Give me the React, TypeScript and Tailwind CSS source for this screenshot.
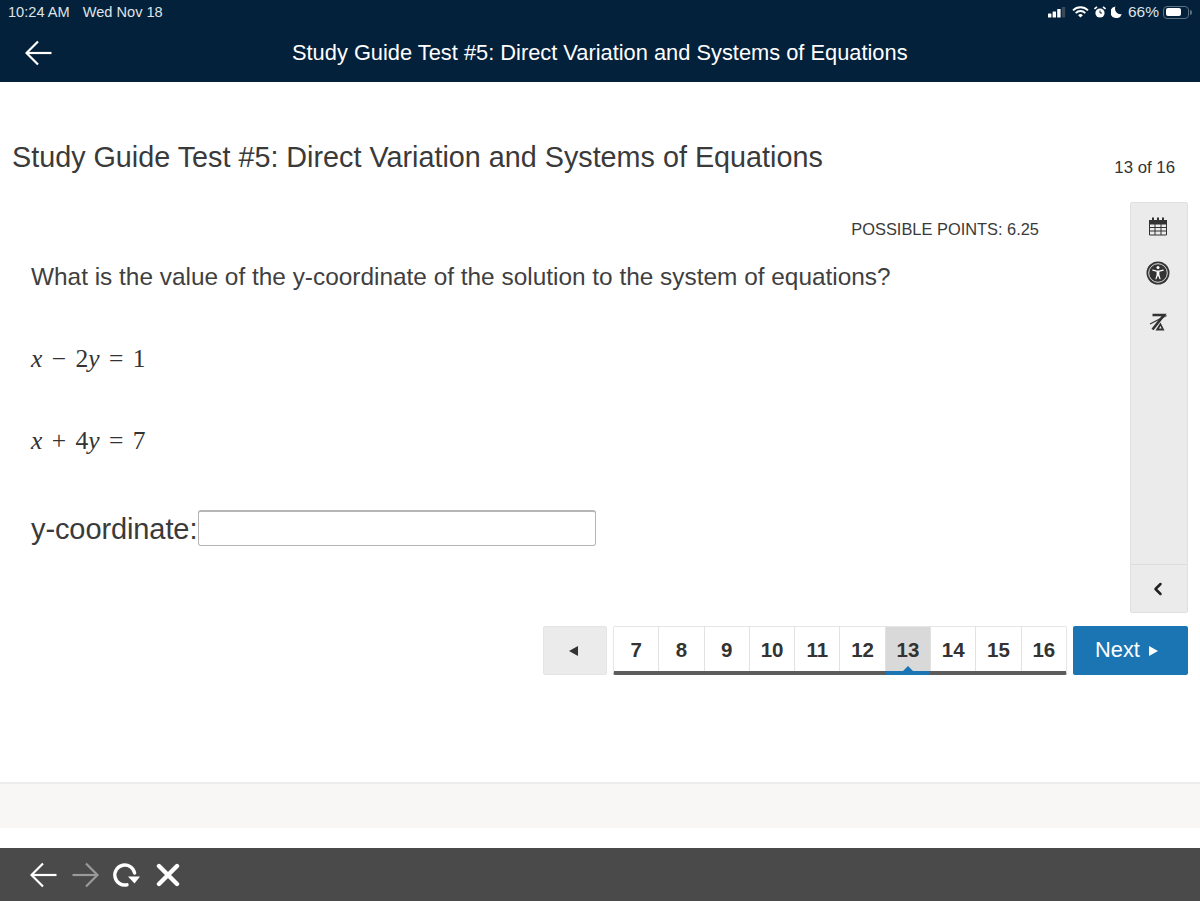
import React from 'react'
import { ChevronLeft } from 'lucide-react'

const pages = [7, 8, 9, 10, 11, 12, 13, 14, 15, 16]

const BackArrow = ({ color = '#fff', flip = false }: { color?: string; flip?: boolean }) => (
  <svg width="27" height="26" viewBox="0 0 27 26" fill="none" stroke={color} strokeWidth="2.2" className={flip ? 'rotate-180' : ''}>
    <path d="M1.5 13H26.5" />
    <path d="M13 1.5L1.5 13L13 24.5" />
  </svg>
)

const CalendarIcon = () => (
  <svg width="20" height="21" viewBox="0 0 20 21" fill="#333">
    <rect x="1" y="4" width="18" height="4" />
    <rect x="4" y="1.5" width="2" height="4" />
    <rect x="9" y="1.5" width="2" height="4" />
    <rect x="14" y="1.5" width="2" height="4" />
    <path d="M1.5 8v11h17V8z" fill="none" stroke="#333" strokeWidth="1" />
    <path d="M1.5 11.5h17M1.5 15h17M7 8v11M13 8v11" stroke="#333" strokeWidth="1" />
  </svg>
)

const AccessIcon = () => (
  <svg width="24" height="24" viewBox="0 0 24 24">
    <circle cx="12" cy="12" r="11.5" fill="#333" />
    <circle cx="12" cy="12" r="9.3" fill="none" stroke="#eee" strokeWidth="0.9" />
    <circle cx="12" cy="6.6" r="1.5" fill="#fff" />
    <path d="M6.8 9.2L10.6 10.2H13.4L17.2 9.2" stroke="#fff" strokeWidth="1.2" fill="none" strokeLinecap="round" />
    <path d="M10.6 10.2h2.8v3.6l1.3 4.4h-1.1L12 14.6l-1.6 3.6H9.3l1.3-4.4z" fill="#fff" />
  </svg>
)

const NoTextIcon = () => (
  <svg width="18" height="20" viewBox="0 0 18 20" fill="none">
    <path d="M3.5 3h11.5L3.5 17.5" stroke="#333" strokeWidth="2.6" />
    <path d="M1 12L17.5 3.5" stroke="#333" strokeWidth="1.3" />
    <path d="M6.5 18.5L11.5 10.5L15.5 18.5z" fill="#333" />
    <path d="M10 16.5h2.6l-1-2.6z" fill="#ebebeb" />
  </svg>
)

const ReloadIcon = () => (
  <svg width="28" height="28" viewBox="0 0 28 28" fill="none">
    <path d="M22.6 12A10 10 0 1 0 15 23.8" stroke="#fff" strokeWidth="3.4" strokeLinecap="round" />
    <path d="M16 15.5H28L22.5 22.5z" fill="#fff" />
  </svg>
)

const CloseIcon = () => (
  <svg width="24" height="24" viewBox="0 0 24 24" fill="none" stroke="#fff" strokeWidth="4.4" strokeLinecap="round">
    <path d="M3 3L21 21M21 3L3 21" />
  </svg>
)

const StatusIcons = () => (
  <div className="flex items-center">
    <svg width="18" height="11" viewBox="0 0 18 11" className="mr-[6px]">
      <rect x="0" y="6.5" width="3.4" height="4" rx="0.5" fill="#fff" />
      <rect x="4.6" y="4.5" width="3.4" height="6" rx="0.5" fill="#fff" />
      <rect x="9.2" y="2" width="3.4" height="8.5" rx="0.5" fill="#fff" />
      <rect x="13.8" y="0" width="3.4" height="10.5" rx="0.5" fill="#37495b" />
    </svg>
    <svg width="17" height="12" viewBox="0 0 17 12" fill="none" stroke="#fff" strokeWidth="1.9" className="mr-[5px]">
      <path d="M1 4.4a10.5 10.5 0 0 1 15 0" />
      <path d="M3.7 7.1a6.6 6.6 0 0 1 9.6 0" />
      <path d="M8.5 11.6l-2.4-2.4a3.4 3.4 0 0 1 4.8 0z" fill="#fff" stroke="none" />
    </svg>
    <svg width="12" height="13" viewBox="0 0 12 13" className="mr-[5px]">
      <circle cx="6" cy="7" r="4.6" fill="#fff" />
      <path d="M6 4.5V7h2" stroke="#03213a" strokeWidth="1" fill="none" />
      <path d="M0.5 3L3 0.8M11.5 3L9 0.8" stroke="#fff" strokeWidth="1.6" />
    </svg>
    <svg width="11" height="12" viewBox="0 0 11 12" className="mr-[6px]">
      <path d="M4.5 0.5A5.8 5.8 0 1 0 10.8 8.2 5.6 5.6 0 0 1 4.5 0.5z" fill="#fff" />
    </svg>
    <span className="text-[15.5px] leading-none text-[#dfe4e9] mr-[4px]">66%</span>
    <div className="w-[26px] h-[13px] rounded-[4px] border border-[#5d6f80] p-[1.5px]">
      <div className="w-[15px] h-full rounded-[2px] bg-white" />
    </div>
    <div className="w-[2px] h-[5px] rounded-r-sm bg-[#5d6f80] ml-[1px]" />
  </div>
)

export default function App() {
  return (
    <div className="flex flex-col h-[901px] bg-white font-['Liberation_Sans',Arial,sans-serif] text-[#333] overflow-hidden">
      {/* Top bar */}
      <header className="h-[82px] bg-[#03213a] shrink-0">
        <div className="flex items-center justify-between h-[24px] pl-[8px] pr-[8px] text-white">
          <div className="flex text-[14.6px] leading-none text-[#dfe4e9]">
            <span>10:24 AM</span>
            <span className="ml-[13px]">Wed Nov 18</span>
          </div>
          <StatusIcons />
        </div>
        <div className="flex items-center h-[58px]">
          <div className="ml-[25px]"><BackArrow /></div>
          <h1 className="ml-[240px] text-[21.83px] leading-none text-white whitespace-nowrap">
            Study Guide Test #5: Direct Variation and Systems of Equations
          </h1>
        </div>
      </header>

      {/* Test title */}
      <div className="flex items-center justify-between h-[120px] shrink-0 pl-[12px] pr-[25px]">
        <h2 className="text-[28.75px] leading-none text-[#3a3a3a] whitespace-nowrap mt-[30px]">
          Study Guide Test #5: Direct Variation and Systems of Equations
        </h2>
        <span className="text-[16.8px] leading-none mt-[52px]">13 of 16</span>
      </div>

      {/* Question + tools */}
      <div className="flex h-[411px] shrink-0 pl-[31px] pr-[12px]">
        <div className="flex-1 flex flex-col">
          <div className="text-right text-[16.4px] leading-none text-[#3a3a3a] pt-[19px] pr-[91px]">
            POSSIBLE POINTS: 6.25
          </div>
          <p className="mt-[28px] text-[24.4px] leading-none text-[#3f3f3f]">
            What is the value of the y-coordinate of the solution to the system of equations?
          </p>
          <div className="mt-[57px] font-['Liberation_Serif',serif] text-[25.5px] leading-[24px] [word-spacing:3px] text-[#333] whitespace-pre">
            <i>x</i>{' − '}2<i>y</i>{' = 1'}
          </div>
          <div className="mt-[58px] font-['Liberation_Serif',serif] text-[25.5px] leading-[24px] [word-spacing:3px] text-[#333] whitespace-pre">
            <i>x</i>{' + '}4<i>y</i>{' = 7'}
          </div>
          <div className="mt-[58px] flex items-center">
            <span className="mt-[2px] text-[29px] leading-none tracking-[-0.1px] text-[#3a3a3a]">y-coordinate:</span>
            <div className="w-[398px] h-[36px] -mt-[1px] ml-[1px] rounded-[3px] border border-[#b5b5b5] border-t-2 bg-white" />
          </div>
        </div>

        <aside className="w-[58px] flex flex-col bg-[#ebebeb] border border-[#e0e0e0] rounded-[2px]">
          <div className="flex-1 flex flex-col items-center pt-[13px] pr-[2px]">
            <CalendarIcon />
            <div className="mt-[24px]"><AccessIcon /></div>
            <div className="mt-[27px]"><NoTextIcon /></div>
          </div>
          <div className="h-[48px] border-t border-[#dcdcdc] flex items-center justify-center pr-[2px]">
            <ChevronLeft className="w-[20px] h-[20px] text-[#222]" strokeWidth={3} />
          </div>
        </aside>
      </div>

      {/* Pagination */}
      <nav className="flex justify-end h-[49px] mt-[13px] shrink-0 pr-[12px]">
        <button className="w-[64px] h-full bg-[#ebebeb] border border-[#e4e4e4] rounded-[2px] flex items-center justify-center pr-[4px]">
          <span className="w-0 h-0 border-y-[5px] border-y-transparent border-r-[9px] border-r-[#333]" />
        </button>
        <div className="ml-[6px] w-[454px] flex border-x border-t border-[#e6e6e6] border-b-[4px] border-b-[#5c5c5c] rounded-[2px]">
          {pages.map((p) => (
            <div
              key={p}
              className={`relative flex-1 flex items-center justify-center pt-[2px] text-[20.5px] font-bold text-[#333] border-r border-[#e2e2e2] last:border-r-0 ${p === 13 ? 'bg-[#d9d9d9]' : 'bg-white'}`}
            >
              {p}
              {p === 13 && (
                <>
                  <span className="absolute -bottom-[4px] left-0 right-0 h-[4px] bg-[#1b75b3]" />
                  <span className="absolute bottom-0 left-1/2 -ml-[5px] w-0 h-0 border-x-[5px] border-x-transparent border-b-[5px] border-b-[#1b75b3]" />
                </>
              )}
            </div>
          ))}
        </div>
        <button className="ml-[6px] w-[115px] h-full bg-[#1b75b3] rounded-[2px] flex items-center justify-center pr-[8px] text-white text-[21.8px]">
          Next
          <span className="ml-[9px] w-0 h-0 border-y-[5px] border-y-transparent border-l-[9px] border-l-white" />
        </button>
      </nav>

      {/* Footer band */}
      <div className="mt-[107px] h-[46px] shrink-0 bg-[#f8f7f5] border-t-2 border-[#ececec]" />
      <div className="h-[20px] shrink-0 bg-white" />

      {/* Browser toolbar */}
      <footer className="h-[53px] shrink-0 bg-[#4a4a4a] flex items-center pl-[30px]">
        <BackArrow />
        <div className="ml-[15px]"><BackArrow color="#9a9a9a" flip /></div>
        <div className="ml-[13px]"><ReloadIcon /></div>
        <div className="ml-[16px]"><CloseIcon /></div>
      </footer>
    </div>
  )
}
